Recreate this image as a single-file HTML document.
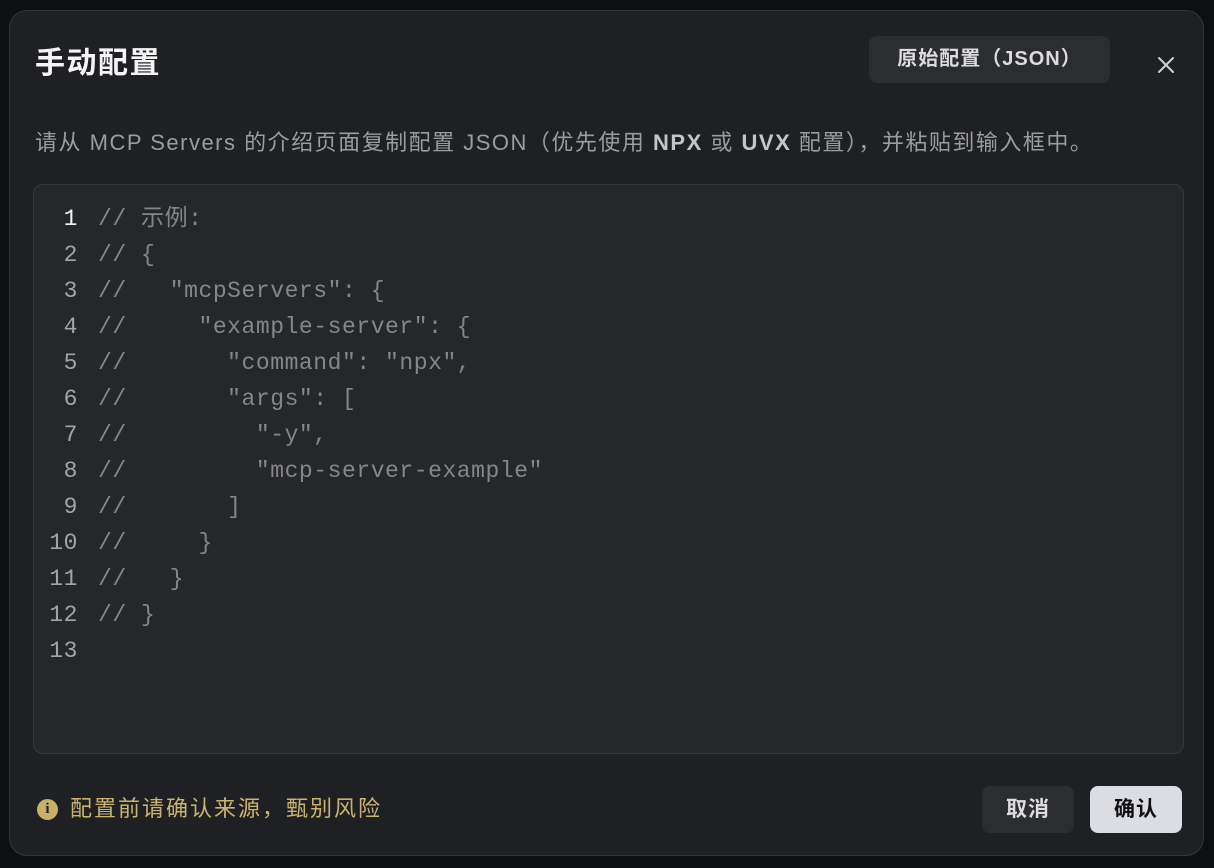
<!DOCTYPE html>
<html><head><meta charset="utf-8"><style>
html,body{margin:0;padding:0;width:1214px;height:868px;background:#0e0f11;overflow:hidden;font-family:"Liberation Sans","Noto Sans CJK SC",sans-serif}
.dlg{position:absolute;left:9px;top:10px;width:1195px;height:846px;background:#1f2023;border:1px solid #34353a;border-radius:18px;box-sizing:border-box}
.title{position:absolute;left:25px;top:33px;font-size:30px;font-weight:bold;color:#f4f4f5;line-height:40px;letter-spacing:1.5px}
.raw{position:absolute;left:859px;top:25px;width:241px;height:47px;background:#2c2d31;border-radius:8px;color:#dcdce0;font-size:20px;font-weight:bold;line-height:47px;text-align:center;letter-spacing:1px}
.close{position:absolute;left:1146px;top:44px}
.desc{position:absolute;left:25px;top:116px;font-size:22px;color:#9b9ca1;line-height:32px;white-space:nowrap;letter-spacing:1.5px}
.desc b{color:#c4c5ca}
.ed{position:absolute;left:23px;top:173px;width:1151px;height:570px;background:#26272b;border:1px solid #36373c;border-radius:10px;box-sizing:border-box}
.code{position:absolute;left:0;top:16px;font-family:"Liberation Mono","Noto Sans CJK SC",monospace;font-size:23px;letter-spacing:0.55px;line-height:36px;white-space:pre}
.ln{display:inline-block;width:44px;text-align:right;color:#a3a4a8;margin-right:20px}
.ln.a{color:#f2f2f3}
.c{color:#85868b}
.foot{position:absolute;left:27px;top:784px;font-size:22px;color:#cbb46e;line-height:28px;display:flex;align-items:center;letter-spacing:2px}
.ic{width:21px;height:21px;border-radius:50%;background:#c8b06a;color:#1f2023;font-size:15px;font-weight:bold;text-align:center;line-height:21px;margin-right:12px;font-family:"Liberation Serif",serif;letter-spacing:0}
.btn{position:absolute;top:775px;width:92px;height:47px;border-radius:8px;font-size:21px;font-weight:bold;line-height:47px;text-align:center;letter-spacing:1px}
.cancel{left:972px;background:#2c2d31;color:#dcdce0}
.ok{left:1080px;width:92px;background:#dcdde2;color:#111}
</style></head><body>
<div class="dlg">
<div class="title">手动配置</div>
<div class="raw">原始配置（JSON）</div>
<svg class="close" width="20" height="20" viewBox="0 0 20 20"><path d="M3 3L17 17M17 3L3 17" stroke="#d0d0d4" stroke-width="2" stroke-linecap="round"/></svg>
<div class="desc">请从 MCP Servers 的介绍页面复制配置 JSON（优先使用 <b>NPX</b> 或 <b>UVX</b> 配置），并粘贴到输入框中。</div>
<div class="ed"><div class="code"><span class="ln a">1</span><span class="c">// 示例:</span>
<span class="ln">2</span><span class="c">// {</span>
<span class="ln">3</span><span class="c">//   "mcpServers": {</span>
<span class="ln">4</span><span class="c">//     "example-server": {</span>
<span class="ln">5</span><span class="c">//       "command": "npx",</span>
<span class="ln">6</span><span class="c">//       "args": [</span>
<span class="ln">7</span><span class="c">//         "-y",</span>
<span class="ln">8</span><span class="c">//         "mcp-server-example"</span>
<span class="ln">9</span><span class="c">//       ]</span>
<span class="ln">10</span><span class="c">//     }</span>
<span class="ln">11</span><span class="c">//   }</span>
<span class="ln">12</span><span class="c">// }</span>
<span class="ln">13</span></div></div>
<div class="foot"><div class="ic">i</div>配置前请确认来源，甄别风险</div>
<div class="btn cancel">取消</div>
<div class="btn ok">确认</div>
</div>
</body></html>
